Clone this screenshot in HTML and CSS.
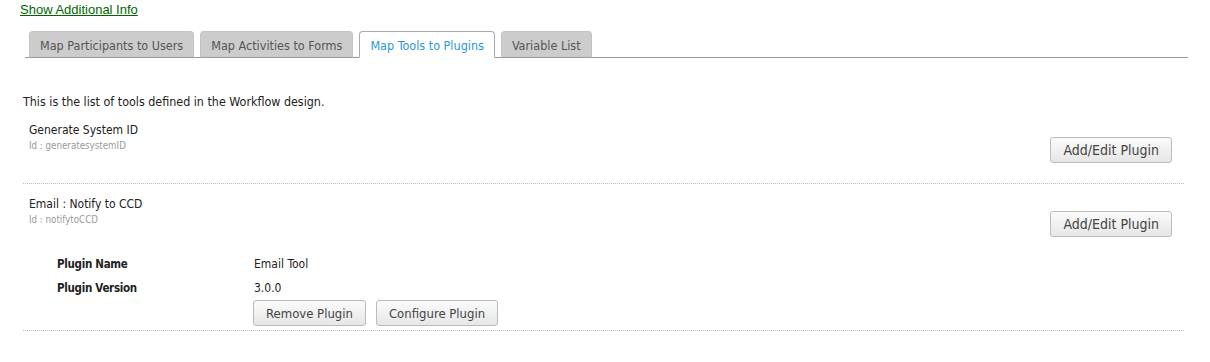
FILE: index.html
```html
<!DOCTYPE html>
<html lang="en">
<head>
    <meta charset="UTF-8">
    <title>Map Tools to Plugins</title>
    <link rel="stylesheet" href="styles.css">
</head>
<body>
    <div class="page">
        <a href="#" class="info-link">Show Additional Info</a>

        <!-- Tabs -->
        <ul class="tabs">
            <li class="tab"><a href="#">Map Participants to Users</a></li>
            <li class="tab"><a href="#">Map Activities to Forms</a></li>
            <li class="tab active"><a href="#">Map Tools to Plugins</a></li>
            <li class="tab"><a href="#">Variable List</a></li>
        </ul>

        <div class="tab-content">
            <p class="intro">This is the list of tools defined in the Workflow design.</p>

            <div class="tool">
                <div class="tool-head">
                    <div class="tool-info">
                        <div class="tool-name">Generate System ID</div>
                        <div class="tool-id">Id : generatesystemID</div>
                    </div>
                    <button class="btn">Add/Edit Plugin</button>
                </div>
            </div>

            <div class="tool has-plugin">
                <div class="tool-head">
                    <div class="tool-info">
                        <div class="tool-name">Email : Notify to CCD</div>
                        <div class="tool-id">Id : notifytoCCD</div>
                    </div>
                    <button class="btn">Add/Edit Plugin</button>
                </div>
                <div class="plugin">
                    <div class="plugin-row">
                        <span class="plugin-label">Plugin Name</span>
                        <span class="plugin-value">Email Tool</span>
                    </div>
                    <div class="plugin-row">
                        <span class="plugin-label">Plugin Version</span>
                        <span class="plugin-value">3.0.0</span>
                    </div>
                    <div class="plugin-actions">
                        <button class="btn">Remove Plugin</button>
                        <button class="btn">Configure Plugin</button>
                    </div>
                </div>
            </div>
        </div>
    </div>
</body>
</html>
```

FILE: styles.css
```css
* {
    margin: 0;
    padding: 0;
    box-sizing: border-box;
}

body {
    background: #fff;
    font-family: Tahoma, 'DejaVu Sans Condensed', 'Noto Sans', sans-serif;
    font-size: 12px;
    color: #222;
}

.page {
    padding: 2px 22px 0 20px;
}

.info-link {
    display: inline-block;
    font-family: 'Liberation Sans', Arial, sans-serif;
    font-size: 13px;
    line-height: 16px;
    color: #006600;
    text-decoration: underline;
}

.tabs {
    list-style: none;
    display: flex;
    gap: 6px;
    margin: 13px 0 0 5px;
    padding-left: 4px;
    border-bottom: 1px solid #999;
}

.tab {
    margin-bottom: -1px;
}

.tab a {
    display: block;
    height: 27px;
    padding: 1px 10px 0;
    line-height: 26px;
    font-size: 12.5px;
    color: #555;
    text-decoration: none;
    background: #ccc;
    border: 1px solid #c4c4c4;
    border-bottom-color: #999;
    border-radius: 4px 4px 0 0;
}

.tab.active a {
    background: #fff;
    color: #2a97dd;
    border-color: #aaa;
    border-bottom-color: #fff;
}

.tab-content {
    padding: 37px 0 0 3px;
}

.intro {
    font-size: 12.4px;
    line-height: 14px;
    color: #222;
    margin-bottom: 13px;
}

.tool {
    border-bottom: 1px dotted #bbb;
    width: 1161px;
    padding: 0 12px 0 6px;
}

.tool + .tool {
    padding-top: 12px;
}

.tool-head {
    display: flex;
    justify-content: space-between;
    align-items: flex-start;
    padding-bottom: 20px;
}

.has-plugin .tool-head {
    padding-bottom: 15px;
}

.tool-name {
    font-size: 12px;
    line-height: 16px;
    color: #222;
    margin-bottom: 1px;
}

.tool-id {
    font-size: 9.7px;
    line-height: 14px;
    color: #999;
}

.tool-head .btn {
    margin-top: 15px;
    font-size: 14px;
}

.btn {
    height: 26px;
    padding: 0 12px;
    font-family: Tahoma, 'DejaVu Sans Condensed', 'Noto Sans', sans-serif;
    font-size: 13px;
    color: #444;
    background: linear-gradient(#fbfbfb, #e6e6e6);
    border: 1px solid #bbb;
    border-radius: 3px;
    cursor: pointer;
}

.plugin {
    padding: 0 0 4px 28px;
}

.plugin-row {
    display: flex;
    line-height: 24px;
    font-size: 12px;
}

.plugin-label {
    width: 197px;
    font-weight: bold;
    font-size: 11.5px;
    letter-spacing: -0.3px;
}

.plugin-actions {
    display: flex;
    gap: 10px;
    margin-left: 196px;
}
```
